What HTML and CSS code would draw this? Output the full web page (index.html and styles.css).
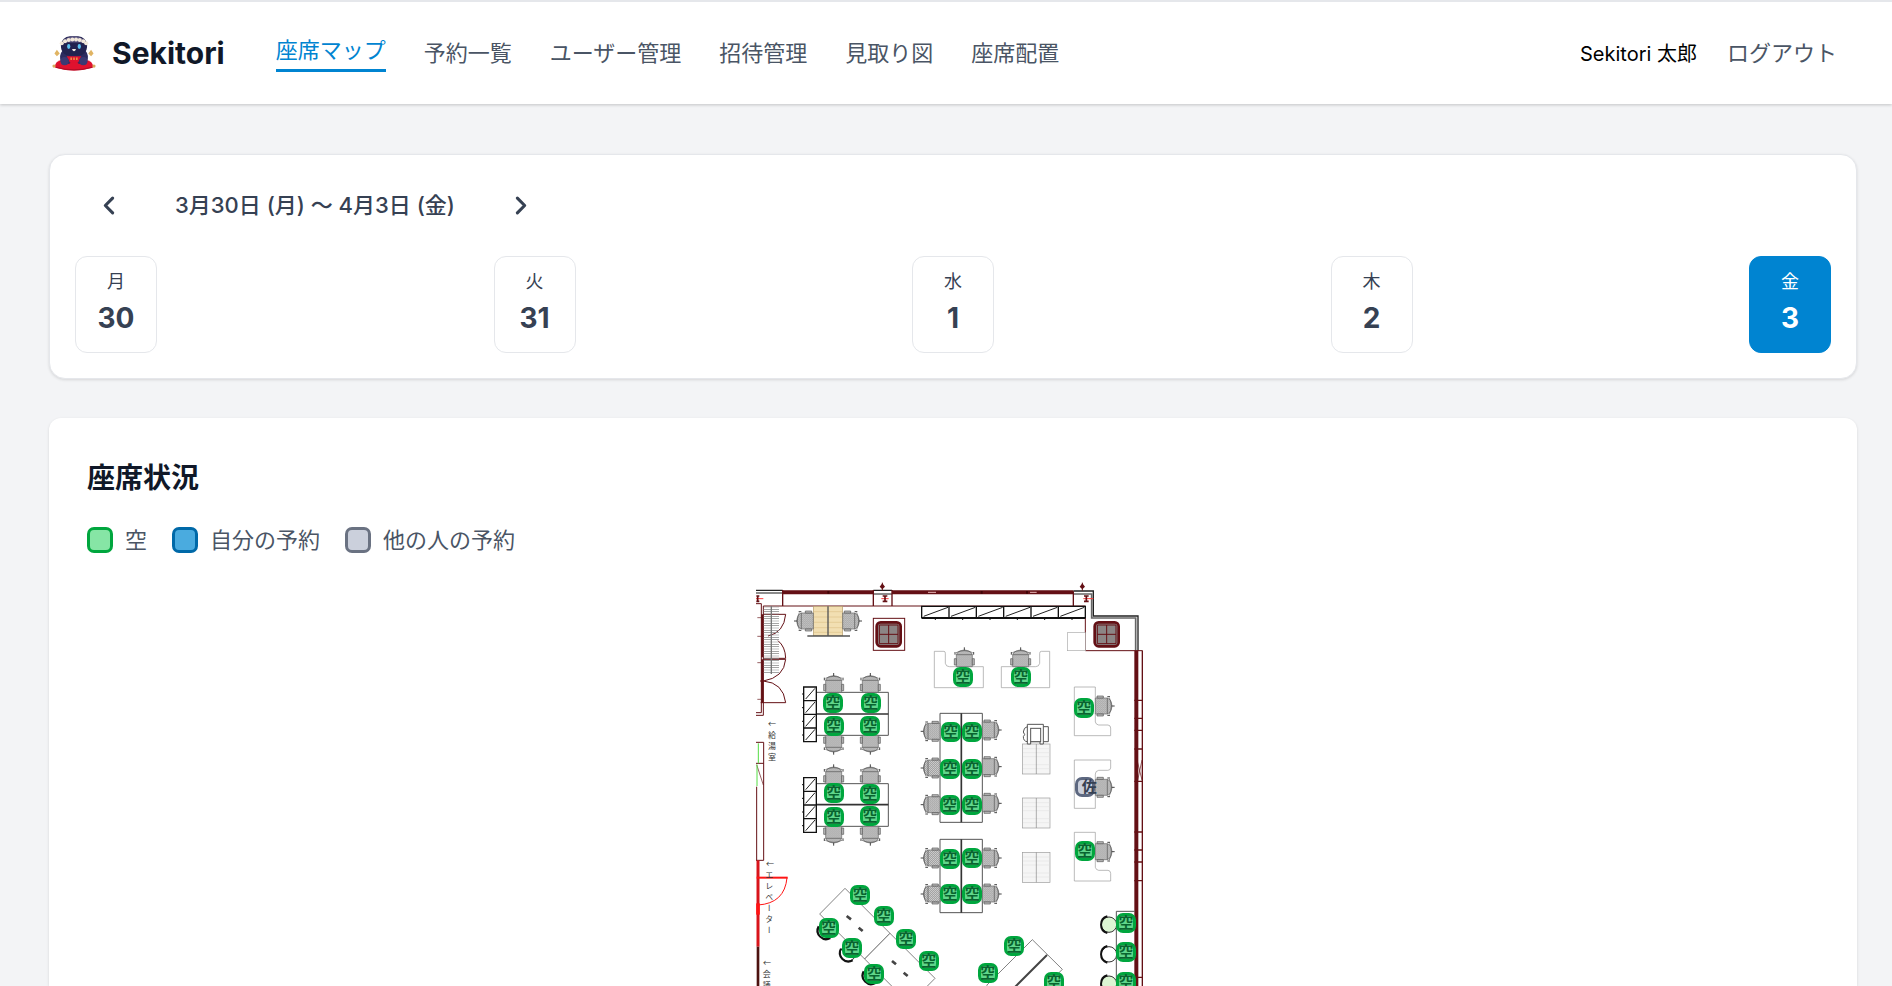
FILE: index.html
```html
<!DOCTYPE html>
<html lang="ja">
<head>
  <meta charset="UTF-8" />
  <meta name="viewport" content="width=device-width, initial-scale=1.0"/>
  <title>Sekitori</title>
  <link rel="stylesheet" href="styles.css">
</head>

<body>

  <!-- HEADER -->
  <header class="header">
    <a class="brand" href="#">
      <svg class="brand-logo" viewBox="0 0 108 88" aria-hidden="true">
        <path d="M12 66 Q4 76 8 80 Q54 94 100 80 Q104 76 96 66 Q84 58 54 58 Q24 58 12 66Z" fill="#e0122e"/>
        <path d="M10 79 Q54 92 98 79" fill="none" stroke="#b00d26" stroke-width="3"/>
        <circle cx="5" cy="76" r="4" fill="#d7a85a"/>
        <circle cx="103" cy="76" r="4" fill="#d7a85a"/>
        <path d="M26 38 Q16 50 22 66 Q28 74 44 70 L50 62 H58 L64 70 Q80 74 86 66 Q92 50 82 38Z" fill="#2d2c60"/>
        <path d="M36 52 H72 L64 68 H44Z" fill="#e0122e"/>
        <path d="M47 55 V61 M54 55 V61 M61 55 V61" stroke="#f0b54f" stroke-width="3"/>
        <rect x="22" y="3" width="64" height="48" rx="22" fill="#232350"/>
        <path d="M26 18 Q32 4 54 3 Q76 4 82 18Z" fill="#5a5580"/>
        <g fill="#f2e8da">
          <circle cx="24" cy="20" r="5"/>
          <circle cx="32" cy="15" r="5"/>
          <circle cx="41" cy="12" r="5"/>
          <circle cx="50" cy="11" r="5"/>
          <circle cx="59" cy="11" r="5"/>
          <circle cx="68" cy="12" r="5"/>
          <circle cx="77" cy="15" r="5"/>
          <circle cx="84" cy="20" r="5"/>
        </g>
        <ellipse cx="41" cy="28" rx="4" ry="6" fill="#5cc3f0"/>
        <ellipse cx="67" cy="28" rx="4" ry="6" fill="#5cc3f0"/>
        <path d="M49 34 H59 Q57 40 54 40 Q51 40 49 34Z" fill="#f4ede3"/>
        <path d="M12 36 L19 45 L12 52 L6 45Z M96 36 L102 45 L96 52 L89 45Z" fill="#e0b463"/>
        <circle cx="31" cy="64" r="10" fill="#3b3973"/>
        <circle cx="77" cy="64" r="10" fill="#3b3973"/>
      </svg>
      <span>Sekitori</span>
    </a>
    <nav class="nav-links">
      <a class="active" href="#">座席マップ</a>
      <a href="#">予約一覧</a>
      <a href="#">ユーザー管理</a>
      <a href="#">招待管理</a>
      <a href="#">見取り図</a>
      <a href="#">座席配置</a>
    </nav>
    <div class="user">
      <span class="user-name">Sekitori 太郎</span>
      <button class="logout" type="button">ログアウト</button>
    </div>
  </header>

  <main class="main">

    <!-- WEEK -->
    <section class="card week">
      <div class="week-nav">
        <button type="button" aria-label="前の週">
          <svg viewBox="0 0 24 24"><path d="M15 5 L8 12 L15 19"/></svg>
        </button>
        <span>3月30日 (月) 〜 4月3日 (金)</span>
        <button type="button" aria-label="次の週">
          <svg viewBox="0 0 24 24"><path d="M9 5 L16 12 L9 19"/></svg>
        </button>
      </div>
      <div class="days">
        <button class="day" type="button"><span>月</span><strong>30</strong></button>
        <button class="day" type="button"><span>火</span><strong>31</strong></button>
        <button class="day" type="button"><span>水</span><strong>1</strong></button>
        <button class="day" type="button"><span>木</span><strong>2</strong></button>
        <button class="day selected" type="button"><span>金</span><strong>3</strong></button>
      </div>
    </section>

    <!-- SEATS -->
    <section class="card status">
      <h2>座席状況</h2>
      <ul class="legend">
        <li><i class="swatch free"></i>空</li>
        <li><i class="swatch mine"></i>自分の予約</li>
        <li><i class="swatch taken"></i>他の人の予約</li>
      </ul>

      <div class="floor" id="floor">
        <svg class="plan" viewBox="0 0 1278 1248" aria-hidden="true">
          <defs>
            <pattern id="mesh" width="6" height="6" patternUnits="userSpaceOnUse">
              <rect width="6" height="6" fill="#cdcdcd"/>
              <path d="M0 1 H3 M3 4 H6" stroke="#808080" stroke-width="2"/>
            </pattern>
            <g id="chair">
              <path d="M-24 0 V-36 Q-20 -48 0 -50 Q20 -48 24 -36 V0Z" fill="url(#mesh)" stroke="#666" stroke-width="2"/>
              <path d="M-24 -36 H24 M-25 -42 Q0 -54 25 -42" fill="none" stroke="#555" stroke-width="2"/>
              <path d="M-30 -24 H-24 V-5 H-30Z M24 -24 H30 V-5 H24Z" fill="#bbb" stroke="#555" stroke-width="2"/>
              <path d="M-28 -44 V-36 M28 -44 V-36 M0 -58 V-49" stroke="#444" stroke-width="3"/>
            </g>
            <g id="shelf">
              <path d="M0 0 H38 V164 H0Z M0 41 H38 M0 82 H38 M0 123 H38" fill="#fff" stroke="#111" stroke-width="4"/>
              <path d="M6 36 L34 4 M6 77 L34 45 M6 118 L34 86 M6 159 L34 127" stroke="#222" stroke-width="3"/>
              <path d="M-5 21 H0 M-5 62 H0 M-5 103 H0 M-5 144 H0" stroke="#111" stroke-width="3"/>
            </g>
            <g id="pillar">
              <rect x="-36" y="-36" width="72" height="72" rx="12" fill="#8c8585" stroke="#641015" stroke-width="8"/>
              <path d="M-28 -28 H28 V28 H-28Z M0 -28 V28 M-28 0 H28" fill="none" stroke="#641015" stroke-width="3"/>
            </g>
            <g id="cabinet">
              <rect width="83" height="90" fill="#f5f5f5" stroke="#999" stroke-width="2"/>
              <path d="M2 14 H81 M2 26 H81 M2 38 H81 M2 62 H81 M2 74 H81" stroke="#e4e4e4" stroke-width="2"/>
              <path d="M42 0 V90" stroke="#888" stroke-width="2"/>
            </g>
            <g id="stool">
              <circle r="23" stroke="#333" stroke-width="3"/>
              <path d="M-5 -25 A26 26 0 0 0 -5 25" fill="none" stroke="#111" stroke-width="6"/>
            </g>
          </defs>

          <!-- outer walls -->
          <g fill="none" stroke="#641015" stroke-width="3">
            <path d="M128 67 H400 M456 67 H1000" stroke-width="12"/>
            <path d="M262 67 H268 M722 67 H728 M858 67 H864" stroke="#3f0507" stroke-width="8"/>
            <path d="M564 67 H588 M870 67 H890" stroke="#e9b6b6" stroke-width="3"/>
            <path d="M48 61 H128 M400 61 H456 M1000 63 H1060 V138 H1194 V242" stroke="#222" stroke-width="4"/>
            <path d="M48 69 H128 M400 72 H456 M1000 72 H1055 V144 H1187 V242" stroke="#666" stroke-width="5"/>
            <path d="M128 60 V108 M400 60 V108 M456 60 V108 M1000 64 V108" stroke-width="4"/>
            <path d="M70 108 H1036 V242 H1208"/>
            <path d="M48 101 H64 V428 H48 M70 108 V436 H48"/>
            <path d="M67 133 V262 M67 268 V398" stroke-width="7"/>
            <path d="M1189 242 V1248" stroke-width="12"/>
            <path d="M1207 242 V1248 M1183 391 H1207 M1183 445 H1207 M1183 481 H1207 M1183 537 H1207 M1183 634 H1207 M1183 786 H1207 M1183 840 H1207 M1183 876 H1207 M1183 932 H1207 M1183 1222 H1207" stroke-width="4"/>
            <path d="M1191 570 L1206 630 M1206 570 L1191 640" stroke-width="2"/>
            <path d="M427 38 V62 M1027 38 V62"/>
            <path d="M48 517 H71 V871 H48 M48 580 H71 M50 650 V871"/>
            <path d="M50 584 L70 645" stroke-width="2"/>
          </g>
          <path d="M427 40 L435 50 L427 58 L419 50Z M1027 40 L1035 50 L1027 58 L1019 50Z" fill="#641015"/>
          <path d="M55 520 V580 M51 584 V648" stroke="#55dd44" stroke-width="3"/>
          <path d="M48 86 H70 M424 86 H446 M1030 86 H1060" stroke="#ff3b3b" stroke-width="3"/>
          <path d="M428 78 H442 M428 94 H442 M435 78 V94 M1032 78 H1046 M1032 94 H1046 M1039 78 V94 M49 78 H58 M49 94 H58 M53 78 V94" stroke="#641015" stroke-width="5"/>

          <!-- doors -->
          <g fill="none" stroke="#641015" stroke-width="3">
            <path d="M70 133 H137 Q132 188 84 198 M70 265 H137 Q136 230 114 212 M70 268 H137 Q132 323 70 333 H60 M70 333 Q130 338 137 398 H62"/>
            <path d="M52 143 H64 M52 199 H72 M52 278 H64 M52 388 H64" stroke-width="2"/>
          </g>
          <path d="M94 110 V310" stroke="#888" stroke-width="46" stroke-dasharray="2 5"/>
          <path d="M94 108 V312" stroke="#777" stroke-width="4"/>
          <path d="M54 871 V1130" stroke="#d8141b" stroke-width="9"/>
          <path d="M54 1000 V1034" stroke="#ff1414" stroke-width="11"/>
          <path d="M54 1130 V1248" stroke="#4c1210" stroke-width="8"/>
          <path d="M50 923 H143" stroke="#ff1414" stroke-width="6"/>
          <path d="M141 923 Q134 1000 54 1005" fill="none" stroke="#ff1414" stroke-width="3"/>

          <!-- signs on the left wall -->
          <g class="sign">
            <text x="84" y="471">←</text>
            <text class="vertical" x="96 96 96" y="483 515 548">給湯室</text>
            <text x="78" y="890">←</text>
            <text class="vertical" x="88 88 88 88 88 88" y="903 936 968 1002 1035 1069">エレベーター</text>
            <text x="69" y="1188">←</text>
            <text class="vertical" x="80 80" y="1200 1232">会議</text>
          </g>

          <!-- top furniture -->
          <rect x="220" y="109" width="88" height="88" fill="#f2dfb2" stroke="#b39a6a" stroke-width="2"/>
          <path d="M222 125 H306 M222 141 H306 M222 157 H306 M222 173 H306 M222 187 H306" stroke="#dec38b" stroke-width="2"/>
          <path d="M264 109 V198 M202 198 H330" stroke="#555" stroke-width="4"/>
          <rect x="400" y="145" width="94" height="96" fill="#fff" stroke="#641015" stroke-width="3"/>
          <use href="#pillar" x="446" y="193"/>
          <use href="#pillar" x="1100" y="193"/>
          <path d="M545 109 H1036 V143 H545Z M627 109 V143 M709 109 V143 M791 109 V143 M873 109 V143 M955 109 V143" fill="#fff" stroke="#111" stroke-width="4"/>
          <path d="M545 144 H1036" stroke="#111" stroke-width="6"/>
          <path d="M551 139 L624 112 M633 139 L706 112 M715 139 L788 112 M797 139 L870 112 M879 139 L952 112 M961 139 L1033 112" stroke="#222" stroke-width="3"/>
          <path d="M586 144 V150 M668 144 V150 M750 144 V150 M832 144 V150 M914 144 V150 M996 144 V150" stroke="#111" stroke-width="3"/>
          <rect x="982" y="188" width="54" height="54" fill="#fff" stroke="#aaa" stroke-width="2"/>

          <!-- desks -->
          <g fill="#fff" stroke="#999" stroke-width="2">
            <path d="M583 244 H612 Q616 244 616 250 V280 Q618 290 628 290 H730 V353 H583Z"/>
            <path d="M929 244 H904 Q899 244 899 250 V280 Q897 290 887 290 H784 V353 H929Z"/>
            <path d="M1003 351 H1066 V456 Q1068 464 1076 465 H1104 Q1112 466 1112 474 V497 H1003Z"/>
            <path d="M1003 570 H1112 V594 Q1111 601 1103 601 H1076 Q1066 603 1066 612 V715 H1003Z"/>
            <path d="M1003 787 H1066 V892 Q1068 900 1076 901 H1104 Q1112 902 1112 910 V933 H1003Z"/>
          </g>
          <g fill="#fff" stroke="#555" stroke-width="3">
            <path d="M228 367 H445 V496 H228Z M228 641 H445 V769 H228Z"/>
            <path d="M600 430 H727 V757 H600Z M600 808 H727 V1028 H600Z"/>
          </g>
          <path d="M228 432 H445 M228 704 H445 M664 430 V757 M664 808 V1028" stroke="#333" stroke-width="5"/>
          <use href="#shelf" x="191" y="351"/>
          <use href="#shelf" x="191" y="623"/>

          <g>
            <use href="#chair" transform="translate(220 153) rotate(-90)"/>
            <use href="#chair" transform="translate(308 153) rotate(90)"/>
            <use href="#chair" transform="translate(281 367)"/>
            <use href="#chair" transform="translate(391 367)"/>
            <use href="#chair" transform="translate(281 496) rotate(180)"/>
            <use href="#chair" transform="translate(391 496) rotate(180)"/>
            <use href="#chair" transform="translate(281 641)"/>
            <use href="#chair" transform="translate(391 641)"/>
            <use href="#chair" transform="translate(281 769) rotate(180)"/>
            <use href="#chair" transform="translate(391 769) rotate(180)"/>
            <use href="#chair" transform="translate(673 290)"/>
            <use href="#chair" transform="translate(842 290)"/>
            <use href="#chair" transform="translate(600 484) rotate(-90)"/>
            <use href="#chair" transform="translate(600 594) rotate(-90)"/>
            <use href="#chair" transform="translate(600 704) rotate(-90)"/>
            <use href="#chair" transform="translate(600 864) rotate(-90)"/>
            <use href="#chair" transform="translate(600 972) rotate(-90)"/>
            <use href="#chair" transform="translate(727 480) rotate(90)"/>
            <use href="#chair" transform="translate(727 590) rotate(90)"/>
            <use href="#chair" transform="translate(727 700) rotate(90)"/>
            <use href="#chair" transform="translate(727 864) rotate(90)"/>
            <use href="#chair" transform="translate(727 972) rotate(90)"/>
            <use href="#chair" transform="translate(1066 408) rotate(90)"/>
            <use href="#chair" transform="translate(1066 652) rotate(90)"/>
            <use href="#chair" transform="translate(1066 845) rotate(90)"/>
          </g>

          <!-- copier and cabinets -->
          <use href="#cabinet" x="847" y="522"/>
          <use href="#cabinet" x="847" y="684"/>
          <use href="#cabinet" x="847" y="847"/>
          <g fill="#fff" stroke="#555" stroke-width="3">
            <path d="M862 470 H925 V515 H862 Q850 514 850 500 L854 494 L850 486 Q851 472 862 470Z"/>
            <path d="M862 463 H910 V522 H900 V514 H872 V522 H862Z"/>
            <rect x="872" y="475" width="30" height="40"/>
          </g>

          <!-- diagonal tables -->
          <g fill="#fff" stroke="#444" stroke-width="2">
            <path d="M315 955 L450 1090 L374 1167 L239 1032Z"/>
            <path d="M450 1090 L585 1225 L509 1302 L374 1167Z"/>
            <path d="M877 1109 L967 1198 L830 1335 L740 1246Z"/>
          </g>
          <path d="M921 1155 L820 1256" stroke="#444" stroke-width="6"/>
          <path d="M320 1038 L333 1048 M356 1073 L368 1083 M456 1173 L468 1183 M491 1208 L503 1218" stroke="#444" stroke-width="8"/>
          <use href="#stool" fill="#fff" transform="translate(257 1083) rotate(-45)"/>
          <use href="#stool" fill="#fff" transform="translate(324 1150) rotate(-45)"/>
          <use href="#stool" fill="#fff" transform="translate(392 1218) rotate(-45)"/>

          <!-- counter -->
          <path d="M1129 1248 V1024 H1184" fill="none" stroke="#555" stroke-width="3"/>
          <use href="#stool" fill="#dcf5d3" x="1107" y="1064"/>
          <use href="#stool" fill="#fff" x="1107" y="1153"/>
          <use href="#stool" fill="#dcf5d3" x="1107" y="1241"/>
        </svg>
      </div>
    </section>
  </main>

  <script src="script.js"></script>
</body>
</html>
```
FILE: styles.css
```css
* {
  box-sizing: border-box;
}

body {
  margin: 0;
  height: 100vh;
  display: flex;
  flex-direction: column;
  background: #f3f4f6;
  color: #364153;
  font-family: Inter, 'Noto Sans CJK JP', sans-serif;
  font-size: 22px;
  line-height: 32px;
}

button {
  padding: 0;
  border: none;
  background: none;
  color: inherit;
  font: inherit;
  cursor: pointer;
}

a {
  text-decoration: none;
}

/* header */
.header {
  flex: none;
  display: flex;
  align-items: center;
  height: 104px;
  padding: 0 55px 0 52px;
  background: #fff;
  border-top: 2px solid #e5e7eb;
  box-shadow: 0 1px 3px rgba(0, 0, 0, 0.2);
}

.brand {
  display: flex;
  align-items: center;
  gap: 16px;
  margin-right: 51px;
  color: #101828;
  font-size: 30px;
  font-weight: 700;
}

.brand-logo {
  width: 44px;
  height: 36px;
}

.nav-links {
  display: flex;
  align-items: center;
  gap: 38px;
}

.nav-links a {
  color: #4a5565;
}

.nav-links .active {
  padding-bottom: 3px;
  border-bottom: 3px solid #0084d1;
  color: #0084d1;
}

.user {
  display: flex;
  align-items: baseline;
  gap: 30px;
  margin-left: auto;
}

.user-name {
  color: #000;
  font-size: 20px;
}

.logout {
  color: #4a5565;
}

/* layout */
.main {
  flex: 1;
  min-height: 0;
  overflow-y: auto;
  scrollbar-width: none;
  padding: 50px 35px 0 49px;
}

.card {
  background: #fff;
  border-radius: 16px;
  box-shadow: 0 1px 3px rgba(0, 0, 0, 0.12);
}

/* week picker */
.week {
  padding: 25px;
  border: 1px solid #e5e7eb;
}

.week-nav {
  display: flex;
  align-items: center;
  gap: 32px;
  height: 50px;
  margin-bottom: 26px;
  font-weight: 500;
}

.week-nav button {
  display: flex;
  justify-content: center;
  width: 68px;
}

.week-nav svg {
  width: 25px;
  height: 25px;
  fill: none;
  stroke: #364153;
  stroke-width: 3;
  stroke-linecap: round;
  stroke-linejoin: round;
}

.days {
  display: flex;
  justify-content: space-between;
}

.day {
  display: flex;
  flex-direction: column;
  align-items: center;
  gap: 4px;
  width: 82px;
  height: 97px;
  padding-top: 9px;
  border: 1px solid #e5e7eb;
  border-radius: 12px;
}

.day span {
  font-size: 18px;
}

.day strong {
  font-size: 28px;
  font-weight: 700;
}

.day.selected {
  background: #0084d1;
  border-color: #0084d1;
  color: #fff;
}

/* seat map */
.status {
  margin-top: 39px;
  padding: 38px 38px 0;
  border-radius: 12px 12px 0 0;
}

.status h2 {
  margin: 0 0 24px;
  color: #101828;
  font-size: 28px;
  line-height: 44px;
}

.legend {
  display: flex;
  gap: 25px;
  margin: 0 0 14px;
  padding: 0;
  list-style: none;
  color: #4a5565;
}

.legend li {
  display: flex;
  align-items: center;
  gap: 12px;
}

.swatch {
  width: 26px;
  height: 26px;
  border: 3px solid;
  border-radius: 7px;
}

.free {
  background: #86e5a5;
  border-color: #00a63e;
}

.mine {
  background: #4aabdf;
  border-color: #0069a8;
}

.taken {
  background: #cbd0dc;
  border-color: #6a7282;
}

.floor {
  position: relative;
  width: 426px;
  margin: 0 auto;
}

.plan {
  display: block;
  width: 100%;
}

.sign {
  fill: #333;
  font-family: 'Noto Sans CJK JP', sans-serif;
  font-size: 24px;
}

.vertical {
  writing-mode: vertical-rl;
}

.seat {
  position: absolute;
  width: 20px;
  height: 20px;
  border: 3px solid;
  border-radius: 7px;
  transform: translate(-50%, -50%);
  font-size: 15px;
  font-weight: 700;
  line-height: 14px;
  display: flex;
  align-items: center;
  justify-content: center;
}

.seat.free {
  background: #5fd68a;
  border-color: #00a63e;
}

.seat span {
  flex: none;
}

.seat.free span {
  color: #08642f;
}

.seat.taken {
  justify-content: flex-start;
  padding-left: 4px;
  border-color: #5d6880;
}

.seat.taken span {
  color: #364153;
}
```
FILE: script.js
```js
// seat positions in floor plan units
const PLAN_WIDTH = 1278;
const PLAN_HEIGHT = 1248;

const seats = [
  [669, 322], [843, 322],
  [279, 398], [392, 398], [281, 467], [391, 468],
  [281, 670], [390, 672], [281, 742], [390, 737],
  [632, 485], [696, 485], [631, 597], [696, 597], [629, 706], [696, 706],
  [630, 866], [696, 865], [630, 971], [697, 971],
  [1032, 415], [1034, 651, '佐'], [1034, 843],
  [361, 975], [431, 1038], [498, 1106], [566, 1172],
  [266, 1073], [336, 1135], [403, 1211],
  [823, 1129], [743, 1209], [942, 1235],
  [1158, 1060], [1158, 1146], [1158, 1235]
];

const floor = document.getElementById('floor');

seats.forEach(([x, y, name]) => {
  const seat = document.createElement('button');
  seat.type = 'button';
  seat.className = name ? 'seat taken' : 'seat free';
  seat.style.left = `${x / PLAN_WIDTH * 100}%`;
  seat.style.top = `${y / PLAN_HEIGHT * 100}%`;

  const label = document.createElement('span');
  label.textContent = name || '空';
  seat.appendChild(label);
  floor.appendChild(seat);
});
```
